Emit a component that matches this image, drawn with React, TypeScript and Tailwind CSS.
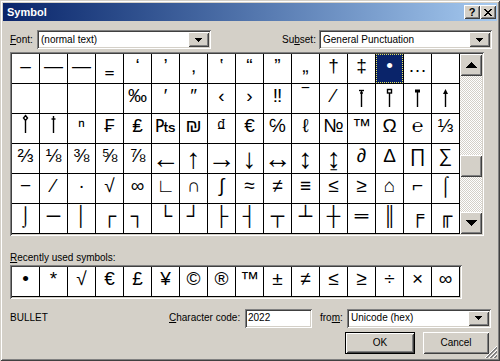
import React from "react";

const RAISED =
  "shadow-[inset_1px_1px_#ffffff,inset_-1px_-1px_#404040,inset_2px_2px_#d4d0c8,inset_-2px_-2px_#808080]";
const SUNKEN =
  "shadow-[inset_1px_1px_#808080,inset_-1px_-1px_#ffffff,inset_2px_2px_#404040,inset_-2px_-2px_#d4d0c8]";

const rows: string[][] = [
  ["–", "—", "―", "‗", "‘", "’", "‚", "‛", "“", "”", "„", "†", "‡", "•", "…", ""],
  ["", "", "", "", "‰", "′", "″", "‹", "›", "‼", "‾", "⁄", "P1", "P2", "P3", "P4"],
  ["P5", "P6", "ⁿ", "₣", "₤", "₧", "₪", "₫", "€", "℅", "ℓ", "№", "™", "Ω", "℮", "⅓"],
  ["⅔", "⅛", "⅜", "⅝", "⅞", "←", "↑", "→", "↓", "↔", "↕", "↨", "∂", "∆", "∏", "∑"],
  ["−", "∕", "∙", "√", "∞", "∟", "∩", "∫", "≈", "≠", "≡", "≤", "≥", "⌂", "⌐", "⌠"],
  ["⌡", "─", "│", "┌", "┐", "└", "┘", "├", "┤", "┬", "┴", "┼", "═", "║", "╒", "╓"],
];

const recent = ["•", "*", "√", "€", "£", "¥", "©", "®", "™", "±", "≠", "≤", "≥", "÷", "×", "∞"];

const ARROWS = ["←", "↑", "→", "↓", "↔", "↕", "↨"];

function Pin({ kind }: { kind: string }) {
  const s = { stroke: "#000", strokeWidth: 1.4, fill: "none" } as const;
  return (
    <svg width="27" height="29" viewBox="0 0 27 29" className="block">
      {kind === "P1" && (
        <g {...s}>
          <line x1="13.5" y1="6" x2="13.5" y2="23" />
          <line x1="11" y1="6.5" x2="16" y2="6.5" />
          <line x1="12" y1="9" x2="15" y2="9" />
        </g>
      )}
      {kind === "P2" && (
        <g {...s}>
          <rect x="11.5" y="5.5" width="4" height="3.5" />
          <line x1="13.5" y1="9" x2="13.5" y2="23" />
        </g>
      )}
      {kind === "P3" && (
        <g>
          <rect x="11" y="5.5" width="5" height="3" fill="#000" />
          <line x1="13.5" y1="8" x2="13.5" y2="23" stroke="#000" strokeWidth="1.4" />
        </g>
      )}
      {kind === "P4" && (
        <g>
          <line x1="13.5" y1="8" x2="13.5" y2="23" stroke="#000" strokeWidth="1.4" />
          <polygon points="13.5,5 11,10 16,10" fill="#000" />
        </g>
      )}
      {kind === "P5" && (
        <g {...s}>
          <polygon points="13.5,1.5 15.5,4 13.5,6.5 11.5,4" />
          <line x1="13.5" y1="6.5" x2="13.5" y2="19" />
        </g>
      )}
      {kind === "P6" && (
        <g {...s}>
          <line x1="13.5" y1="2" x2="13.5" y2="19" />
          <line x1="11.5" y1="5" x2="15.5" y2="5" />
        </g>
      )}
    </svg>
  );
}

function Cell({ ch, selected }: { ch: string; selected?: boolean }) {
  const isPin = /^P\d$/.test(ch);
  const isArrow = ARROWS.includes(ch);
  const isLow = ch === "‗";
  let txt = "text-[19px] leading-[24px] font-['Liberation_Sans','DejaVu_Sans',sans-serif]";
  if (isArrow) txt = "text-[28px] leading-[29px] font-['Liberation_Sans','DejaVu_Sans',sans-serif]";
  if (isLow) txt = "text-[16px] leading-[24px] font-['DejaVu_Sans',sans-serif]";
  return (
    <div className="relative w-[28px] h-[30px] border-r border-b border-black bg-white overflow-hidden flex justify-center">
      {selected && (
        <div className="absolute inset-0 bg-[#0a246a] border border-dotted border-[#e8e860]" />
      )}
      {isPin ? (
        <Pin kind={ch} />
      ) : (
        <span className={`relative whitespace-nowrap ${txt} ${selected ? "text-white" : "text-black"}`}>
          {ch}
        </span>
      )}
    </div>
  );
}

function DropArrow() {
  return (
    <svg width="7" height="4" viewBox="0 0 7 4" shapeRendering="crispEdges">
      <path d="M0 0h7v1h-1v1h-1v1h-1v1h-1v-1h-1v-1h-1v-1h-1z" fill="#000" />
    </svg>
  );
}

function ScrollArrow({ up }: { up?: boolean }) {
  const rects = [];
  for (let i = 0; i < 6; i++) {
    const w = 1 + i * 2;
    const y = up ? i : 5 - i;
    rects.push(<rect key={i} x={5 - i} y={y} width={w} height={1} />);
  }
  return (
    <svg width="11" height="6" viewBox="0 0 11 6" shapeRendering="crispEdges" fill="#000">
      {rects}
    </svg>
  );
}

function Combo({ w, text }: { w: string; text: string }) {
  return (
    <div className={`${w} h-[19px] bg-white flex items-center ${SUNKEN}`}>
      <span className="pl-[4px] flex-1 whitespace-nowrap overflow-hidden">{text}</span>
      <div className={`w-[21px] h-[15px] mr-[2px] bg-[#d4d0c8] flex items-center justify-center ${RAISED}`}>
        <DropArrow />
      </div>
    </div>
  );
}

export default function App() {
  return (
    <div
      className={`relative w-[500px] h-[361px] overflow-hidden bg-[#d4d0c8] p-[3px] flex flex-col text-[10px] leading-[12px] text-black font-['Liberation_Sans',Arial,sans-serif] shadow-[inset_1px_1px_#d4d0c8,inset_-1px_-1px_#404040,inset_2px_2px_#ffffff,inset_-2px_-2px_#808080]`}
    >
      {/* Title bar */}
      <div className="h-[18px] shrink-0 flex items-center pl-[4px] pr-[1px] bg-linear-to-r from-[#0a246a] to-[#a6caf0]">
        <span className="flex-1 text-[11px] font-bold text-white">Symbol</span>
        <div className={`w-[16px] h-[14px] bg-[#d4d0c8] flex items-center justify-center ${RAISED}`}>
          <span className="text-[11px] font-bold leading-[11px] mt-[1px]">?</span>
        </div>
        <div className={`w-[16px] h-[14px] bg-[#d4d0c8] flex items-center justify-center ${RAISED}`}>
          <svg width="8" height="7" viewBox="0 0 8 7" shapeRendering="crispEdges">
            <path d="M0 0h2v1h1v1h2v-1h1v-1h2v1h-1v1h-1v1h-1v1h1v1h1v1h1v1h-2v-1h-1v-1h-2v1h-1v1h-2v-1h1v-1h1v-1h1v-1h-1v-1h-1v-1h-1z" fill="#000" />
          </svg>
        </div>
      </div>

      {/* Font / Subset */}
      <div className="mt-[9px] h-[19px] flex items-center shrink-0">
        <div className="w-[34px] pl-[7px]">
          <u>F</u>ont:
        </div>
        <Combo w="w-[174px]" text="(normal text)" />
        <div className="w-[71px]" />
        <div className="w-[37px]">
          Su<u>b</u>set:
        </div>
        <Combo w="w-[173px]" text="General Punctuation" />
      </div>

      {/* Symbol grid */}
      <div className={`mt-[3px] ml-[7px] w-[474px] p-[2px] flex shrink-0 ${SUNKEN}`}>
        <div className="w-[448px] flex flex-col">
          {rows.map((r, ri) => (
            <div key={ri} className="flex">
              {r.map((ch, ci) => (
                <Cell key={ci} ch={ch} selected={ri === 0 && ci === 13} />
              ))}
            </div>
          ))}
        </div>
        <div className="w-[22px] flex flex-col">
          <div className={`h-[22px] bg-[#d4d0c8] flex items-center justify-center ${RAISED}`}>
            <ScrollArrow up />
          </div>
          <div className="flex-1 flex flex-col bg-[repeating-conic-gradient(#ffffff_0%_25%,#d4d0c8_0%_50%)] bg-size-[2px_2px]">
            <div className="h-[79px]" />
            <div className={`h-[22px] bg-[#d4d0c8] ${RAISED}`} />
          </div>
          <div className={`h-[22px] bg-[#d4d0c8] flex items-center justify-center ${RAISED}`}>
            <ScrollArrow />
          </div>
        </div>
      </div>

      {/* Recently used */}
      <div className="mt-[16px] pl-[7px] shrink-0">
        <u>R</u>ecently used symbols:
      </div>
      <div className={`mt-[1px] ml-[7px] w-[452px] p-[2px] flex shrink-0 ${SUNKEN}`}>
        {recent.map((ch, i) => (
          <Cell key={i} ch={ch} />
        ))}
      </div>

      {/* Character code row */}
      <div className="mt-[9px] h-[20px] flex items-center shrink-0">
        <div className="w-[166px] pl-[7px]">BULLET</div>
        <div className="w-[76px]">
          <u>C</u>haracter code:
        </div>
        <div className={`w-[67px] h-[19px] bg-white flex items-center pl-[3px] ${SUNKEN}`}>2022</div>
        <div className="w-[8px]" />
        <div className="w-[27px]">
          fro<u>m</u>:
        </div>
        <Combo w="w-[144px]" text="Unicode (hex)" />
      </div>

      {/* Buttons */}
      <div className="mt-[4px] h-[22px] flex shrink-0">
        <div className="w-[342px]" />
        <div className="w-[70px] h-[22px] border border-black">
          <div className={`w-full h-full bg-[#d4d0c8] flex items-center justify-center ${RAISED}`}>OK</div>
        </div>
        <div className="w-[8px]" />
        <div className={`w-[66px] h-[22px] bg-[#d4d0c8] flex items-center justify-center ${RAISED}`}>Cancel</div>
      </div>

      {/* Resize grip */}
      <svg
        className="absolute right-[3px] bottom-[3px]"
        width="12"
        height="12"
        viewBox="0 0 12 12"
        shapeRendering="crispEdges"
      >
        <line x1="0" y1="12" x2="12" y2="0" stroke="#ffffff" />
        <line x1="4" y1="12" x2="12" y2="4" stroke="#ffffff" />
        <line x1="8" y1="12" x2="12" y2="8" stroke="#ffffff" />
        <line x1="1" y1="12" x2="12" y2="1" stroke="#808080" />
        <line x1="2" y1="12" x2="12" y2="2" stroke="#808080" />
        <line x1="5" y1="12" x2="12" y2="5" stroke="#808080" />
        <line x1="6" y1="12" x2="12" y2="6" stroke="#808080" />
        <line x1="9" y1="12" x2="12" y2="9" stroke="#808080" />
        <line x1="10" y1="12" x2="12" y2="10" stroke="#808080" />
      </svg>
    </div>
  );
}
